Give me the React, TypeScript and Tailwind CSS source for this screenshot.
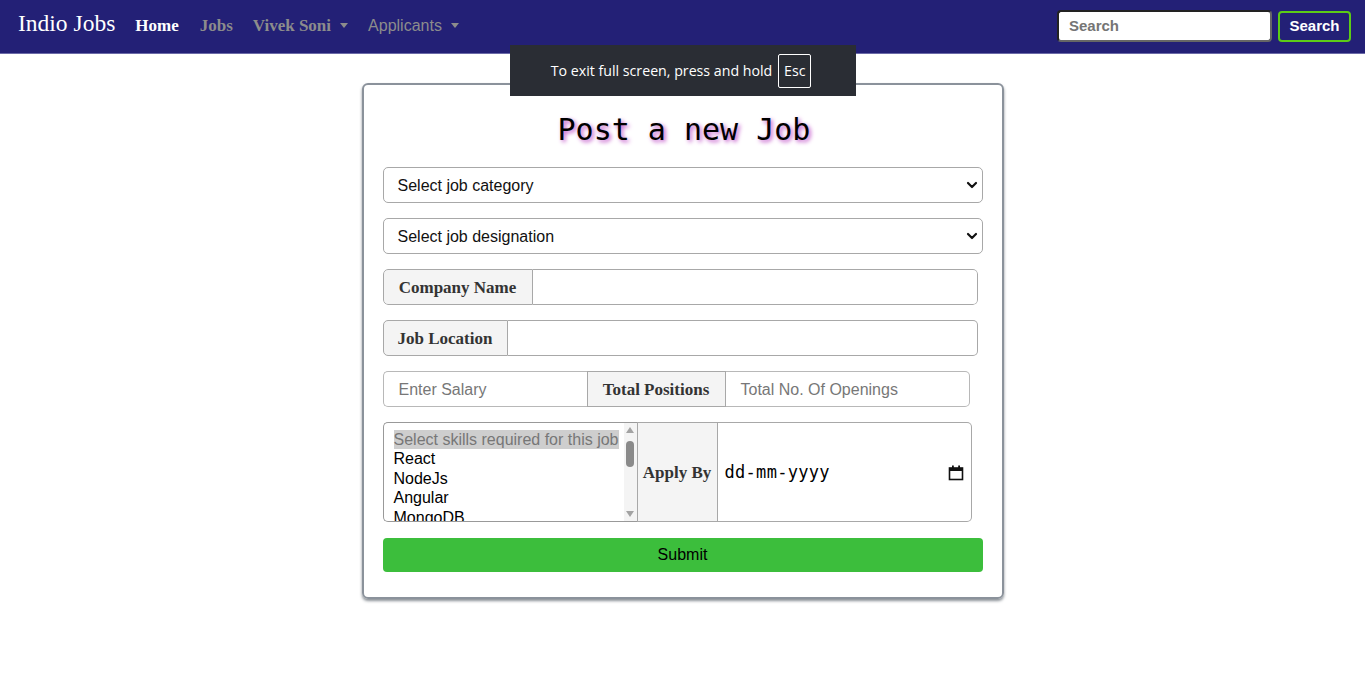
import React from "react";

const Caret = () => (
  <span className="inline-block ml-[9px] align-middle w-0 h-0 border-l-[4.5px] border-r-[4.5px] border-t-[5px] border-l-transparent border-r-transparent border-t-[#8c8c8c]" />
);

const Chevron = () => (
  <svg width="12" height="8" viewBox="0 0 12 8" className="absolute right-[4px] top-1/2 -translate-y-1/2">
    <path d="M2 2 L6 6 L10 2" fill="none" stroke="#111" strokeWidth="2.2" strokeLinecap="round" strokeLinejoin="round" />
  </svg>
);

const Select = ({ label }: { label: string }) => (
  <div className="relative h-[36px] w-[600px] border border-[#a8a8a8] rounded-[5px] flex items-center pl-[14px] pt-[2px] text-[16px] text-[#111] font-['Liberation_Sans',sans-serif]">
    {label}
    <Chevron />
  </div>
);

const Label = ({ children, w }: { children: React.ReactNode; w: string }) => (
  <div className={`h-full flex items-center justify-center pt-[2px] bg-[#f4f4f4] border border-[#a8a8a8] text-[17px] font-bold text-[#333] font-['Liberation_Serif',serif] ${w}`}>
    {children}
  </div>
);

export default function App() {
  return (
    <div className="min-h-[680px] bg-white relative font-['Liberation_Sans',sans-serif]">
      <nav className="h-[54px] bg-[#232076] border-b border-[#6b6aa8] flex items-center justify-between pl-[18px] pr-[14px]">
        <div className="flex items-center -mt-[2px]">
          <span className="text-white text-[23.5px] font-['Liberation_Serif',serif] leading-none mr-[20px] -mt-[4px]">Indio Jobs</span>
          <span className="text-white text-[17px] font-bold font-['Liberation_Serif',serif] mr-[21px]">Home</span>
          <span className="text-[#8c8c8c] text-[17px] font-bold font-['Liberation_Serif',serif] mr-[20px]">Jobs</span>
          <span className="text-[#8c8c8c] text-[17px] font-bold font-['Liberation_Serif',serif] mr-[20px] flex items-center">
            Vivek Soni<Caret />
          </span>
          <span className="text-[#8c8c8c] text-[16px] font-['Liberation_Sans',sans-serif] flex items-center">
            Applicants<Caret />
          </span>
        </div>
        <div className="flex items-center gap-[6px] -mt-[1px]">
          <div className="w-[215px] h-[32px] bg-white rounded-[4px] border-2 border-[#222] border-b-[#666] border-r-[#666] flex items-center pl-[10px] text-[15px] font-bold text-[#757575]">
            Search
          </div>
          <div className="w-[73px] h-[31px] rounded-[4px] border-2 border-[#5ccc16] flex items-center justify-center text-white text-[15px] font-bold">
            Search
          </div>
        </div>
      </nav>

      <div className="absolute left-[510px] top-[45px] w-[346px] h-[51px] bg-[#2a2d34] flex items-center justify-center gap-[6px] pr-[4px] text-white text-[14.2px] font-['Open_Sans',sans-serif] z-10">
        <span>To exit full screen, press and hold</span>
        <span className="border border-white rounded-[2px] h-[34px] w-[33px] flex items-center justify-center">Esc</span>
      </div>

      <div className="flex justify-center pt-[29px]">
        <div className="w-[642px] border-2 border-[#8b929b] rounded-[6px] shadow-[0_2px_3px_rgba(60,70,80,0.6)] px-[19px] pt-[26px] pb-[25px] flex flex-col">
          <h1 className="text-center text-[30px] leading-[38px] text-black font-['DejaVu_Sans_Mono',monospace] [text-shadow:2px_2px_4px_#c050c8] mb-[18px] pl-[3px]">
            Post a new Job
          </h1>
          <div className="flex flex-col gap-[15px]">
            <Select label="Select job category" />
            <Select label="Select job designation" />

            <div className="flex h-[36px] w-[595px] rounded-[5px] overflow-hidden">
              <Label w="w-[150px] rounded-l-[5px]">Company Name</Label>
              <div className="flex-1 border border-l-0 border-[#a8a8a8] rounded-r-[5px]" />
            </div>

            <div className="flex h-[36px] w-[595px]">
              <Label w="w-[125px] rounded-l-[5px]">Job Location</Label>
              <div className="flex-1 border border-l-0 border-[#a8a8a8] rounded-r-[5px]" />
            </div>

            <div className="flex h-[36px] w-[587px] text-[16px] text-[#777]">
              <div className="w-[204px] border border-r-0 border-[#b8b8b8] rounded-l-[5px] flex items-center pl-[15px] pt-[2px]">Enter Salary</div>
              <Label w="w-[139px]">Total Positions</Label>
              <div className="flex-1 border border-l-0 border-[#b8b8b8] rounded-r-[5px] flex items-center pl-[15px] pt-[2px]">Total No. Of Openings</div>
            </div>

            <div className="flex h-[100px] w-[589px]">
              <div className="relative w-[254px] border border-r-0 border-[#999] rounded-l-[5px] overflow-hidden pl-[10px] pt-[7px] text-[16px] leading-[19.4px] text-black">
                <div className="bg-[#cecece] text-[#777] w-fit pr-[1px]">Select skills required for this job</div>
                <div>React</div>
                <div>NodeJs</div>
                <div>Angular</div>
                <div>MongoDB</div>
                <div className="absolute right-0 top-0 bottom-0 w-[13px] bg-[#f4f4f4] flex flex-col items-center">
                  <div className="mt-[4px] w-0 h-0 border-l-[4px] border-r-[4px] border-b-[6px] border-l-transparent border-r-transparent border-b-[#a3a3a3]" />
                  <div className="mt-[8px] w-[8px] h-[26px] rounded-[4px] bg-[#8a8a8a]" />
                  <div className="mt-auto mb-[4px] w-0 h-0 border-l-[4px] border-r-[4px] border-t-[6px] border-l-transparent border-r-transparent border-t-[#a3a3a3]" />
                </div>
              </div>
              <Label w="w-[81px]">Apply By</Label>
              <div className="flex-1 border border-l-0 border-[#a8a8a8] rounded-r-[5px] flex items-center justify-between pl-[7px] pr-[7px] pt-[2px]">
                <span className="text-[17px] text-black font-['DejaVu_Sans_Mono',monospace] tracking-[0.3px]">dd-mm-yyyy</span>
                <svg width="16" height="16" viewBox="0 0 16 16">
                  <rect x="1.5" y="3" width="13" height="11.5" fill="none" stroke="#111" strokeWidth="1.6" />
                  <rect x="1.5" y="3" width="13" height="3" fill="#111" />
                  <rect x="4" y="0.5" width="1.8" height="3" fill="#111" />
                  <rect x="10.2" y="0.5" width="1.8" height="3" fill="#111" />
                </svg>
              </div>
            </div>

            <div className="mt-[1px] h-[34px] w-[600px] bg-[#3cbe3c] rounded-[4px] flex items-center justify-center text-[16px] text-black">
              Submit
            </div>
          </div>
        </div>
      </div>
    </div>
  );
}
